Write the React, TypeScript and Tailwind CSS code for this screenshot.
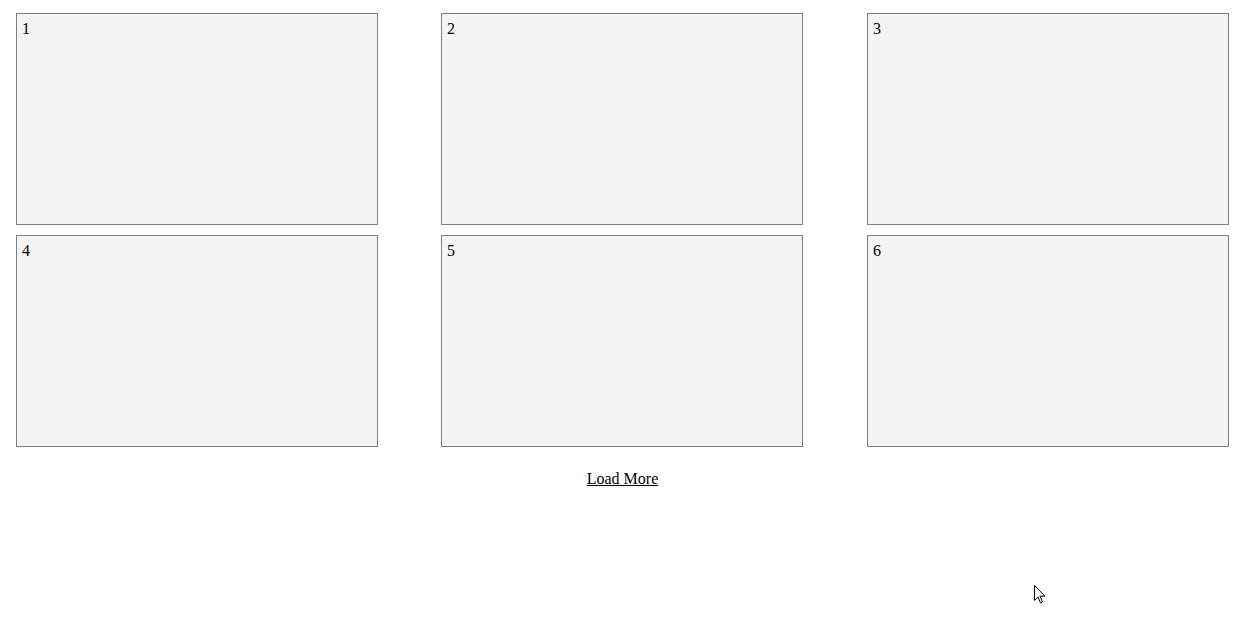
export default function App() {
  const items = [1, 2, 3, 4, 5, 6];
  return (
    <div className="relative h-[622px] w-[1248px] bg-white" style={{ fontFamily: '"Liberation Serif", serif' }}>
      <div className="ml-4 w-[1213px] pt-[13px]">
        <div className="grid grid-cols-[425px_426px_362px] gap-y-[10px]">
          {items.map((n) => (
            <div key={n} className="h-[212px] w-[362px] border border-[#808080] bg-[#f4f4f4] px-[5px] pt-[6px] text-[16px] leading-[18px] text-black">
              {n}
            </div>
          ))}
        </div>
        <div className="mt-[20px] text-center">
          <a href="#" className="text-[16px] leading-[18px] text-black underline">Load More</a>
        </div>
      </div>
      <svg className="absolute left-[1034px] top-[585px]" width="13" height="20" viewBox="0 0 13 20">
        <path d="M0.5 0.5 L0.5 15.5 L4 12 L6.5 18 L8.5 17 L6 11.2 L11 11.2 Z" fill="white" stroke="black" strokeWidth="1" strokeLinejoin="miter" />
      </svg>
    </div>
  );
}
